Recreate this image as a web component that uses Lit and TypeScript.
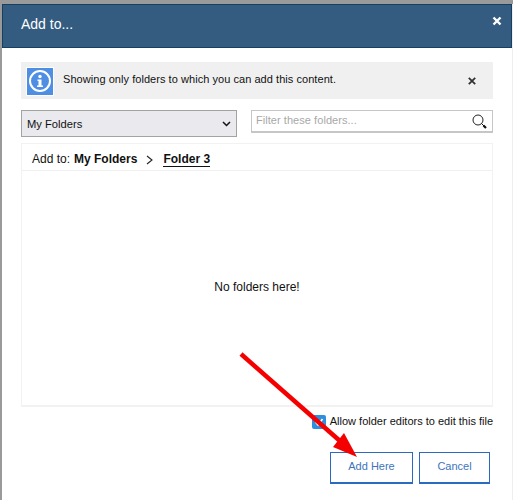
import { LitElement, html, css } from "lit";
import { customElement } from "lit/decorators.js";

@customElement("app-root")
export class AppRoot extends LitElement {
  static styles = css`
    :host { display: block; width: 513px; height: 500px; position: relative; overflow: hidden; background: #fff; font-family: "Liberation Sans", Arial, sans-serif; color: #111; box-sizing: border-box; }
    * { box-sizing: border-box; }
    .frame { height: 500px; padding: 4px 1px 0 2px; background: linear-gradient(#9a9a9a, #9a9a9a) top left / 100% 4px no-repeat, linear-gradient(#9a9a9a, #9a9a9a) top left / 2px 100% no-repeat, linear-gradient(#eee, #eee) top right / 1px 100% no-repeat, #fff; display: flex; flex-direction: column; }
    .head { height: 44px; flex: none; background: #335c80; border: 1px solid #173f63; color: #fff; display: flex; justify-content: space-between; padding: 0 8px 0 18px; }
    .head h1 { margin: 0; font-size: 14px; font-weight: 400; line-height: 38px; }
    .close-w { width: 10px; height: 10px; margin-top: 11px; margin-right: 1px; }
    .body { padding: 14px 19px 0 19px; flex: 1; display: flex; flex-direction: column; }
    .notice { height: 37px; background: #f0f0f0; display: flex; align-items: center; padding: 0 17px 0 5px; font-size: 11px; letter-spacing: 0.05px; }
    .info { width: 28px; height: 29px; background: #4f8fe3; border: 1px solid #fff; display: flex; align-items: center; justify-content: center; flex: none; margin-right: 9px; margin-top: 1px; }
    .notice span { flex: 1; margin-top: -3px; }
    .close-d { width: 8px; height: 8px; }
    .controls { display: flex; gap: 14px; margin-top: 11px; align-items: flex-start; }
    .select { width: 216px; height: 27px; background: #e9e9ee; border: 1px solid #a3a3a3; display: flex; align-items: center; justify-content: space-between; font-size: 11.2px; padding: 0 5px 0 5px; }
    .filter { width: 242px; height: 23px; border: 1px solid #c6c6c6; border-bottom-width: 2px; background: #fff; display: flex; align-items: center; justify-content: space-between; font-size: 11px; color: #a8a8a8; padding: 0 5px 0 4px; letter-spacing: 0.05px; }
    .filter span { margin-top: -2px; }
    .panel { margin-top: 6px; height: 264px; border: 1px solid #f2f2f2; border-bottom-width: 2px; display: flex; flex-direction: column; }
    .crumbs { height: 27px; flex: none; border-bottom: 1px solid #f0f0f0; display: flex; align-items: center; padding: 4px 0 0 10px; font-size: 12px; }
    .crumbs b { margin-left: 4px; }
    .sep { margin: 2px 10px 0 9px; width: 7px; height: 10px; }
    .crumbs .cur { margin-left: 0; border-bottom: 1px solid #111; line-height: 14px; }
    .empty { flex: 1; display: flex; align-items: center; justify-content: center; font-size: 12px; padding-bottom: 3px; }
    .allow { display: flex; justify-content: flex-end; align-items: center; gap: 4px; font-size: 11px; margin-top: 7px; height: 16px; }
    .allow span { margin-top: -2px; }
    .check { width: 14px; height: 14px; border-radius: 2px; background: #2f8fdc; display: flex; align-items: center; justify-content: center; }
    .actions { display: flex; justify-content: flex-end; gap: 6px; margin-top: 22px; padding-right: 3px; }
    .btn { height: 32px; border: 1px solid #2a6ac0; border-bottom-width: 2px; color: #3d74bd; background: #fff; display: flex; align-items: center; justify-content: center; font-size: 11px; padding-bottom: 3px; }
    .add { width: 83px; }
    .cancel { width: 71px; }
    .arrow { position: absolute; left: 0; top: 0; pointer-events: none; }
  `;

  render() {
    return html`
      <div class="frame">
        <div class="head">
          <h1>Add to...</h1>
          <svg class="close-w" viewBox="0 0 10 10"><path d="M1.5 1.5l7 7M8.5 1.5l-7 7" stroke="#fff" stroke-width="2.4" /></svg>
        </div>
        <div class="body">
          <div class="notice">
            <div class="info">
              <svg width="24" height="24" viewBox="0 0 24 24">
                <circle cx="12" cy="12" r="10" fill="none" stroke="#fff" stroke-width="2" />
                <circle cx="12" cy="7.5" r="1.7" fill="#fff" />
                <path d="M9.5 10.5h4v6h1.5v1.5h-6v-1.5h1.5v-4.500h-1z" fill="#fff" />
              </svg>
            </div>
            <span>Showing only folders to which you can add this content.</span>
            <svg class="close-d" viewBox="0 0 8 8"><path d="M.8.8l6.400 6.400M7.200.8l-6.400 6.400" stroke="#333" stroke-width="1.800" /></svg>
          </div>
          <div class="controls">
            <div class="select">
              <span>My Folders</span>
              <svg width="9" height="6" viewBox="0 0 9 6"><path d="M1 1l3.500 3.500L8 1" fill="none" stroke="#111" stroke-width="1.500" /></svg>
            </div>
            <div class="filter">
              <span>Filter these folders...</span>
              <svg width="15" height="15" viewBox="0 0 15 15">
                <circle cx="6" cy="6" r="5" fill="none" stroke="#222" stroke-width="1" />
                <path d="M9.500 9.500l4 4" stroke="#111" stroke-width="1" />
                <path d="M11.500 11.500l2.500 2.500" stroke="#111" stroke-width="2.200" />
              </svg>
            </div>
          </div>
          <div class="panel">
            <div class="crumbs">
              Add to:<b>My Folders</b>
              <svg class="sep" viewBox="0 0 7 10"><path d="M1 1l5 4-5 4" fill="none" stroke="#222" stroke-width="1.100" /></svg>
              <b class="cur">Folder 3</b>
            </div>
            <div class="empty">No folders here!</div>
          </div>
          <div class="allow">
            <div class="check">
              <svg width="10" height="10" viewBox="0 0 10 10"><path d="M1.500 5l2.500 3 4.500-6" fill="none" stroke="#fff" stroke-width="1.600" /></svg>
            </div>
            <span>Allow folder editors to edit this file</span>
          </div>
          <div class="actions">
            <div class="btn add">Add Here</div>
            <div class="btn cancel">Cancel</div>
          </div>
        </div>
      </div>
      <svg class="arrow" width="513" height="500" viewBox="0 0 513 500">
        <path d="M241 354L340 441" stroke="#f50000" stroke-width="4.500" fill="none" />
        <path d="M357 457L333 447L344 433z" fill="#f50000" />
      </svg>
    `;
  }
}
